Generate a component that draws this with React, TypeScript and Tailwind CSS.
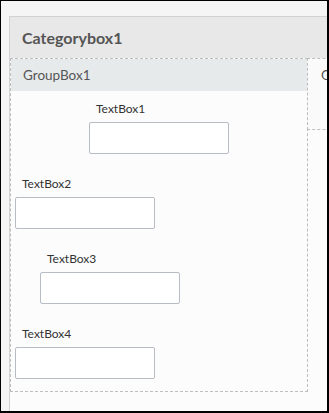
import React from "react";

type Field = { label: string; labelLeft: string; inputLeft: string; top: string };

const fields: Field[] = [
  { label: "TextBox1", labelLeft: "ml-[85px]", inputLeft: "ml-[78px]", top: "mt-[10px]" },
  { label: "TextBox2", labelLeft: "ml-[11px]", inputLeft: "ml-[4px]", top: "mt-[22px]" },
  { label: "TextBox3", labelLeft: "ml-[36px]", inputLeft: "ml-[29px]", top: "mt-[22px]" },
  { label: "TextBox4", labelLeft: "ml-[11px]", inputLeft: "ml-[4px]", top: "mt-[22px]" },
];

function TextField({ field }: { field: Field }) {
  return (
    <div className={`flex flex-col ${field.top}`}>
      <span className={`${field.labelLeft} text-[12px] leading-[16px] text-[#333]`}>{field.label}</span>
      <div className={`${field.inputLeft} mt-[5px] h-[32px] w-[140px] rounded-[2px] border border-[#b8bcc4] bg-white`} />
    </div>
  );
}

export default function App() {
  return (
    <div
      className="h-[413px] w-[329px] overflow-hidden border-t border-l border-r-2 border-b-2 border-black bg-[#f5f5f5]"
      style={{ fontFamily: "Lato, 'Open Sans', sans-serif" }}
    >
      <div className="ml-[8px] mt-[15px] h-[420px] w-[340px] border-l border-t border-[#d2d2d2] bg-[#fcfcfc]">
        <div className="flex h-[41px] items-center bg-[#e8e8e8] px-[12px]">
          <span className="text-[16px] font-bold text-[#555]">Categorybox1</span>
        </div>
        <div className="flex items-start">
          <div className="h-[334px] w-[298px] shrink-0 border border-dashed border-[#bdbdbd]">
            <div className="flex h-[32px] items-center bg-[#e6eaeb] px-[12px]">
              <span className="text-[13.5px] text-[#555]">GroupBox1</span>
            </div>
            {fields.map((f) => (
              <TextField key={f.label} field={f} />
            ))}
          </div>
          <div className="-ml-px h-[72px] w-[60px] shrink-0 overflow-hidden border border-dashed border-[#bdbdbd] bg-[#fafafa]">
            <div className="flex h-[32px] items-center px-[13px]">
              <span className="whitespace-nowrap text-[13.5px] text-[#555]">GroupBox2</span>
            </div>
          </div>
        </div>
      </div>
    </div>
  );
}
